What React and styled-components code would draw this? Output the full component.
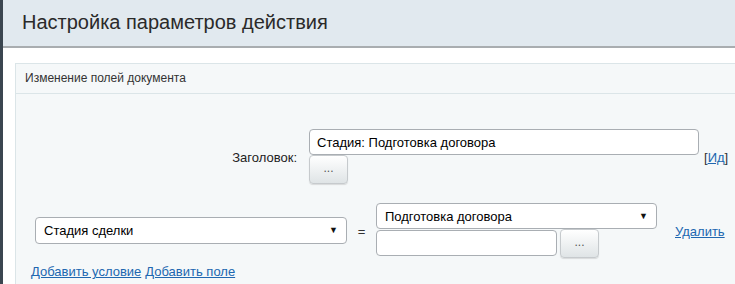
import React from 'react'
import styled, { createGlobalStyle } from 'styled-components'

const GlobalStyle = createGlobalStyle`
  html, body {
    margin: 0;
    padding: 0;
    background: #fff;
  }
  body {
    font-family: 'Liberation Sans', Arial, sans-serif;
    color: #000;
  }
`

const Page = styled.div`
  display: flex;
  width: 735px;
  height: 284px;
  overflow: hidden;
`
const LeftStrip = styled.div`
  width: 3px;
  flex: none;
  background: #3b4650;
`
const Main = styled.div`
  flex: 1;
  display: flex;
  flex-direction: column;
  min-width: 0;
`
const Header = styled.div`
  flex: none;
  height: 48px;
  box-sizing: border-box;
  background: #e1e9ef;
  border-bottom: 2px solid #a9adb0;
  display: flex;
  align-items: center;
  padding-left: 19px;
`
const Title = styled.div`
  font-size: 20px;
  color: #2a2a2a;
  margin-top: -2px;
`
const Content = styled.div`
  flex: 1;
  padding: 15px 0 0 12px;
  display: flex;
`
const Panel = styled.div`
  flex: 1;
  background: #f5f8f9;
  border: 1px solid #dbe5e8;
  border-right: none;
  border-bottom: none;
`
const PanelHead = styled.div`
  height: 30px;
  border-bottom: 1px solid #dbe5e8;
  font-size: 12px;
  color: #333;
  padding-left: 9px;
  display: flex;
  align-items: center;
  box-sizing: border-box;
  padding-bottom: 2px;
`
const PanelBody = styled.div`
  padding-top: 35px;
`
const FieldRow = styled.div`
  display: flex;
  align-items: center;
`
const Label = styled.div`
  width: 281px;
  text-align: right;
  font-size: 13px;
  color: #222;
  margin-right: 12px;
  padding-top: 2px;
`
const Stack = styled.div`
  display: flex;
  flex-direction: column;
  align-items: flex-start;
`
const Input = styled.div`
  width: ${(p) => p.w}px;
  height: 26px;
  box-sizing: border-box;
  background: #fff;
  border: 1px solid #a9aeb3;
  border-radius: 4px;
  font-size: 13px;
  color: #000;
  padding: 0 7px;
  display: flex;
  align-items: center;
`
const SelectBox = styled(Input)`
  justify-content: space-between;
  padding: 0 8px;
  height: ${(p) => p.h || 26}px;
`
const Arrow = styled.span`
  font-size: 9px;
  color: #111;
  margin-top: -1px;
`
const DotsButton = styled.div`
  width: 39px;
  height: 29px;
  box-sizing: border-box;
  border: 1px solid #c6cacd;
  border-radius: 4px;
  background: linear-gradient(#ffffff, #dfe4e6);
  box-shadow: 0 1px 1px rgba(0, 0, 0, 0.12);
  color: #555;
  font-size: 12px;
  display: flex;
  align-items: center;
  justify-content: center;
  padding-bottom: 3px;
  margin-left: ${(p) => p.ml || 0}px;
  margin-top: ${(p) => p.mt || 0}px;
`
const Link = styled.a`
  color: #2067b0;
  text-decoration: underline;
  font-size: 13px;
  cursor: pointer;
`
const IdLink = styled.div`
  font-size: 13px;
  color: #333;
  margin-left: 5px;
  padding-top: 1px;
`
const CondRow = styled.div`
  display: flex;
  align-items: center;
  margin-top: 19px;
  padding-left: 19px;
`
const Equals = styled.div`
  font-size: 13px;
  color: #333;
  width: 29px;
  text-align: center;
  padding-top: 1px;
`
const InlineRow = styled.div`
  display: flex;
  align-items: flex-start;
  margin-top: 1px;
`
const DeleteLink = styled(Link)`
  margin-left: 18px;
  padding-top: 1px;
`
const Links = styled.div`
  padding: 6px 0 0 15px;
  font-size: 13px;
  display: flex;
  gap: 4px;
`

export default function App() {
  return (
    <>
      <GlobalStyle />
      <Page>
        <LeftStrip />
        <Main>
          <Header>
            <Title>Настройка параметров действия</Title>
          </Header>
          <Content>
            <Panel>
              <PanelHead>Изменение полей документа</PanelHead>
              <PanelBody>
                <FieldRow>
                  <Label>Заголовок:</Label>
                  <Stack>
                    <Input w={390}>Стадия: Подготовка договора</Input>
                    <DotsButton>...</DotsButton>
                  </Stack>
                  <IdLink>
                    [<Link>Ид</Link>]
                  </IdLink>
                </FieldRow>
                <CondRow>
                  <SelectBox w={312} h={27}>
                    <span>Стадия сделки</span>
                    <Arrow>▼</Arrow>
                  </SelectBox>
                  <Equals>=</Equals>
                  <Stack>
                    <SelectBox w={281}>
                      <span>Подготовка договора</span>
                      <Arrow>▼</Arrow>
                    </SelectBox>
                    <InlineRow>
                      <Input w={181} />
                      <DotsButton ml={3} mt={-1}>...</DotsButton>
                    </InlineRow>
                  </Stack>
                  <DeleteLink>Удалить</DeleteLink>
                </CondRow>
                <Links>
                  <Link>Добавить условие</Link>
                  <Link>Добавить поле</Link>
                </Links>
              </PanelBody>
            </Panel>
          </Content>
        </Main>
      </Page>
    </>
  )
}
